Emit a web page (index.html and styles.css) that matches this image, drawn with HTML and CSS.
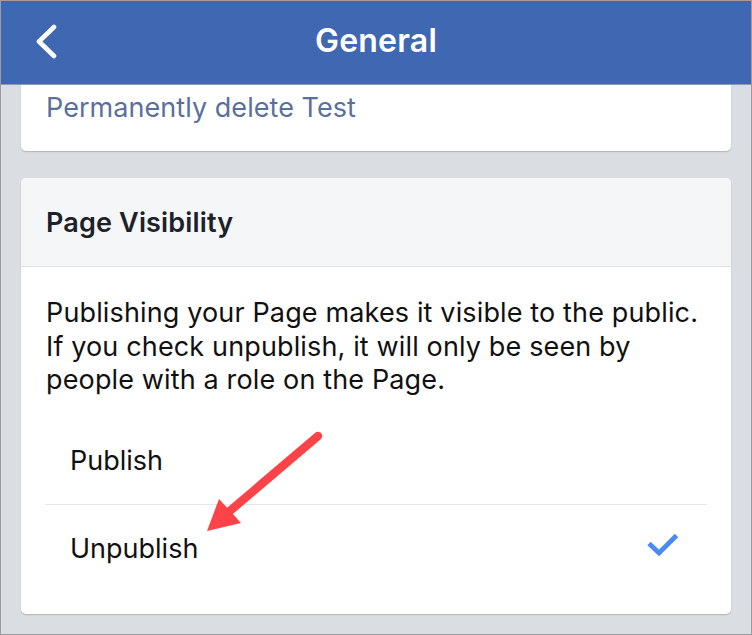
FILE: index.html
```html
<!DOCTYPE html>
<html lang="en">
<head>
  <meta charset="UTF-8">
  <meta name="viewport" content="width=device-width, initial-scale=1.0">
  <link rel="stylesheet" href="styles.css">
  <title>General</title>
</head>
<body>
  <div class="frame">
    <header class="topbar">
      <a class="back" href="#" aria-label="Back">
        <svg width="24" height="36" viewBox="0 0 24 36">
          <polyline points="19,4 4,18.5 19,33" fill="none" stroke="#fff" stroke-width="4.6" stroke-linecap="round" stroke-linejoin="round"/>
        </svg>
      </a>
      <h1>General</h1>
      <span></span>
    </header>

    <main class="content">
      <!-- previous section, scrolled up under the bar -->
      <section class="card card-cut">
        <a class="link" href="#">Permanently delete Test</a>
      </section>

      <section class="card">
        <div class="card-head">Page Visibility</div>
        <p class="card-text">
          Publishing your Page makes it visible to the public.
          If you check unpublish, it will only be seen by
          people with a role on the Page.
        </p>
        <ul class="options">
          <li>Publish</li>
          <li class="selected">
            Unpublish
            <svg class="check" width="32" height="24" viewBox="0 0 32 24">
              <polyline points="2,10.5 12,20 29.5,2.5" fill="none" stroke="#4b8af4" stroke-width="4.8"/>
            </svg>
          </li>
        </ul>
      </section>
    </main>

    <!-- annotation arrow -->
    <svg class="arrow" width="140" height="120" viewBox="0 0 140 120">
      <line x1="127" y1="15" x2="40" y2="89" stroke="#fd4347" stroke-width="8.5" stroke-linecap="round"/>
      <polygon points="16,110 28,78 41,92 50,102" fill="#fd4347"/>
    </svg>
  </div>
</body>
</html>
```

FILE: styles.css
```css
html, body {
  margin: 0;
  background-color: #fff;
  font-family: Inter, "Helvetica Neue", Arial, sans-serif;
}

.frame {
  position: relative;
  width: 752px;
  height: 635px;
  box-sizing: border-box;
  border: 1px solid #9d9d9f;
  background-color: #dadde1;
  overflow: hidden;
}

.topbar {
  height: 84px;
  background-color: #4067b1;
  display: grid;
  grid-template-columns: 1fr auto 1fr;
  align-items: center;
  border-bottom: 1px solid #8e9bb5;
  box-sizing: border-box;
}

.topbar h1 {
  margin: 0 0 4px;
  color: #fff;
  font-size: 32px;
  font-weight: 600;
  letter-spacing: 0.2px;
}

.back {
  display: flex;
  margin-left: 34px;
  margin-top: -4px;
}

.content {
  padding: 0 20px;
}

.card {
  background-color: #fff;
  border-radius: 5px;
  box-shadow: 0 1px 1.5px rgba(0, 0, 0, 0.2);
  margin-bottom: 27px;
  overflow: hidden;
}

.card-cut {
  border-radius: 0 0 5px 5px;
  height: 66px;
  padding: 0 25px;
  box-sizing: border-box;
}

.link {
  display: block;
  padding-top: 6px;
  color: #5b6f9d;
  font-size: 27px;
  letter-spacing: 0.05px;
  text-decoration: none;
}

.card-head {
  height: 88px;
  display: flex;
  align-items: center;
  padding: 0 25px;
  background-color: #f5f6f7;
  border-bottom: 1px solid #dddfe2;
  color: #1d2129;
  font-size: 27px;
  font-weight: 600;
  letter-spacing: 0.15px;
}

.card-text {
  margin: 0;
  padding: 29px 25px 0;
  color: #111;
  font-size: 27px;
  line-height: 33.5px;
  letter-spacing: 0.14px;
}

.options {
  list-style: none;
  margin: 20px 24px 0;
  padding: 0 0 22px;
}

.options li {
  height: 87px;
  display: flex;
  align-items: center;
  justify-content: space-between;
  padding: 0 28px 0 25px;
  color: #111;
  font-size: 27px;
}

.options li + li {
  border-top: 1px solid #e5e6e9;
}

.check {
  margin-bottom: 6px;
}

.arrow {
  position: absolute;
  left: 190px;
  top: 420px;
}
```
